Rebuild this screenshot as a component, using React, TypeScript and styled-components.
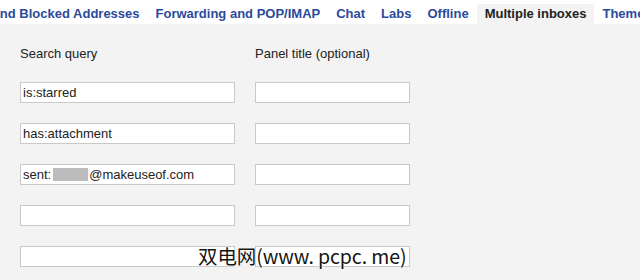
import styled, { createGlobalStyle } from 'styled-components'

const GlobalStyle = createGlobalStyle`
    html, body {
        margin: 0;
        padding: 0;
        background: #f3f3f3;
        font-family: "Liberation Sans", Arial, sans-serif;
        font-size: 13px;
        color: #222;
    }
`

const Page = styled.div`
    position: relative;
    width: 640px;
    height: 280px;
    overflow: hidden;
`

const TabBar = styled.div`
    height: 24px;
    background: #fff;
    overflow: hidden;
    white-space: nowrap;
`

const TabStrip = styled.div`
    display: flex;
    margin-left: -58px;
    padding-top: 4px;
`

const Tab = styled.div<{ $active?: boolean }>`
    flex: none;
    height: 20px;
    line-height: 20px;
    padding: 0 8px;
    font-weight: bold;
    color: ${p => (p.$active ? '#222' : '#2c4a9c')};
    background: ${p => (p.$active ? '#f3f3f3' : 'transparent')};
`

const Content = styled.div`
    display: grid;
    grid-template-columns: 215px 155px;
    column-gap: 20px;
    row-gap: 20px;
    padding: 22px 0 0 20px;
`

const Label = styled.div`
    height: 16px;
    line-height: 16px;
    color: #222;
`

const Field = styled.div`
    box-sizing: border-box;
    height: 21px;
    line-height: 19px;
    padding: 0 2px;
    background: #fff;
    border: 1px solid #c9c9c9;
    color: #222;
    white-space: nowrap;
    overflow: hidden;
`

const Redacted = styled.span`
    display: inline-block;
    width: 35px;
    height: 13px;
    margin: 0 1px 0 2px;
    vertical-align: -2px;
    background: #bcbcbc;
`

const Watermark = styled.div`
    position: absolute;
    left: 198px;
    top: 243px;
    font-family: "Noto Sans CJK SC", sans-serif;
    font-size: 19.5px;
    line-height: 26px;
    letter-spacing: -0.1px;
    color: #151515;
    white-space: nowrap;
    text-shadow: 0 0 2px #fff, 0 0 2px #fff, 0 0 1px #fff;
`

const tabs = [
    'Filters and Blocked Addresses',
    'Forwarding and POP/IMAP',
    'Chat',
    'Labs',
    'Offline',
    'Multiple inboxes',
    'Themes',
]

const queries = ['is:starred', 'has:attachment', 'sent', '', '']

const App = () => {
    return (
        <Page>
            <GlobalStyle />
            <TabBar>
                <TabStrip>
                    {tabs.map(t => (
                        <Tab key={t} $active={t === 'Multiple inboxes'}>{t}</Tab>
                    ))}
                </TabStrip>
            </TabBar>
            <Content>
                <Label>Search query</Label>
                <Label>Panel title (optional)</Label>
                {queries.map((q, i) => [
                    <Field key={'q' + i}>
                        {q === 'sent' ? (
                            <>sent:<Redacted />@makeuseof.com</>
                        ) : q}
                    </Field>,
                    <Field key={'t' + i} />,
                ])}
            </Content>
            <Watermark>双电网(www. pcpc. me)</Watermark>
        </Page>
    )
}

export default App
